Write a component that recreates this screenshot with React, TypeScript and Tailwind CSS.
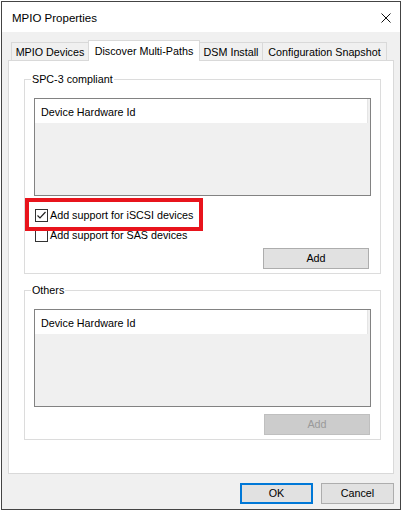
import React from "react";

function Checkbox({ checked }: { checked?: boolean }) {
  return (
    <div className="w-[13px] h-[13px] border border-[#333333] bg-white shrink-0 flex items-center justify-center">
      {checked && (
        <svg width="11" height="11" viewBox="0 0 11 11">
          <path d="M1.5 5.5 L4 8 L9.5 2" fill="none" stroke="#222222" strokeWidth="1.2" />
        </svg>
      )}
    </div>
  );
}

function ListBox() {
  return (
    <div className="h-[98px] border border-[#828282] bg-[#f0f0f0] flex flex-col">
      <div className="h-[24px] w-[333px] bg-white border-r border-[#e5e5e5] flex items-center pl-[6px] pt-[3px]">
        Device Hardware Id
      </div>
    </div>
  );
}

export default function App() {
  return (
    <div className="relative w-[402px] h-[512px] bg-white font-['Liberation_Sans',Arial,sans-serif] text-[10.75px] leading-[13px] text-black">
      <div className="ml-[1px] mt-[1px] w-[400px] h-[509px] border border-[#444444] flex flex-col">
        {/* Title bar */}
        <div className="h-[30px] shrink-0 bg-white flex items-start justify-between pl-[10px] pr-[9px]">
          <span className="text-[11.5px] leading-[14px] pt-[9px]">MPIO Properties</span>
          <svg className="mt-[11px]" width="10" height="10" viewBox="0 0 10 10">
            <path d="M0.5 0.5 L9.5 9.5 M9.5 0.5 L0.5 9.5" fill="none" stroke="#111111" strokeWidth="1" />
          </svg>
        </div>

        {/* Body */}
        <div className="flex-1 bg-[#f0f0f0] px-[6px] pt-[8px] flex flex-col">
          {/* Tabs */}
          <div className="flex items-end pl-[3px] h-[20px]">
            <div className="h-[18px] w-[77px] border-l border-t border-[#d9d9d9] flex items-center justify-center pt-[1px]">
              MPIO Devices
            </div>
            <div className="relative z-10 h-[21px] w-[112px] -mb-[1px] bg-white border-l border-r border-t border-[#d9d9d9] flex items-center justify-center">
              Discover Multi-Paths
            </div>
            <div className="h-[18px] w-[63px] border-r border-t border-[#d9d9d9] flex items-center justify-center pt-[1px]">
              DSM Install
            </div>
            <div className="h-[18px] w-[124px] border-r border-t border-[#d9d9d9] flex items-center justify-center pt-[1px]">
              Configuration Snapshot
            </div>
          </div>

          {/* Panel */}
          <div className="h-[414px] bg-white border border-[#d9d9d9] pl-[15px] pr-[12px] pt-[11px] flex flex-col">
            <fieldset className="m-0 min-w-0 border border-[#dcdcdc] px-[9px] pt-[11px] pb-[4px] flex flex-col">
              <legend className="-ml-[3px] px-[1px] leading-[15px]">SPC-3 compliant</legend>
              <ListBox />
              <div className="mt-[9px] h-[20px] flex items-center pl-[1px]">
                <Checkbox checked />
                <span className="ml-[2px]">Add support for iSCSI devices</span>
              </div>
              <div className="h-[20px] flex items-center pl-[1px]">
                <Checkbox />
                <span className="ml-[2px]">Add support for SAS devices</span>
              </div>
              <button className="mt-[3px] self-end mr-[2px] w-[106px] h-[21px] border border-[#adadad] bg-[#e1e1e1] flex items-center justify-center">
                Add
              </button>
            </fieldset>

            <fieldset className="mt-[9px] min-w-0 border border-[#dcdcdc] px-[9px] pt-[11px] pb-[4px] flex flex-col">
              <legend className="-ml-[3px] px-[1px] leading-[15px]">Others</legend>
              <ListBox />
              <button
                disabled
                className="mt-[7px] self-end mr-[1px] w-[106px] h-[21px] border border-[#bfbfbf] bg-[#cccccc] text-[#9a9a9a] flex items-center justify-center"
              >
                Add
              </button>
            </fieldset>
          </div>

          {/* Dialog buttons */}
          <div className="mt-[9px] flex justify-end gap-[8px]">
            <button className="w-[73px] h-[21px] border-2 border-[#0078d7] bg-[#e1e1e1] flex items-center justify-center">
              OK
            </button>
            <button className="w-[73px] h-[21px] border border-[#adadad] bg-[#e1e1e1] flex items-center justify-center">
              Cancel
            </button>
          </div>
        </div>
      </div>

      {/* Red annotation box */}
      <div className="absolute left-[25px] top-[197px] w-[178px] h-[33px] border-4 border-[#e8141c] pointer-events-none" />
    </div>
  );
}
